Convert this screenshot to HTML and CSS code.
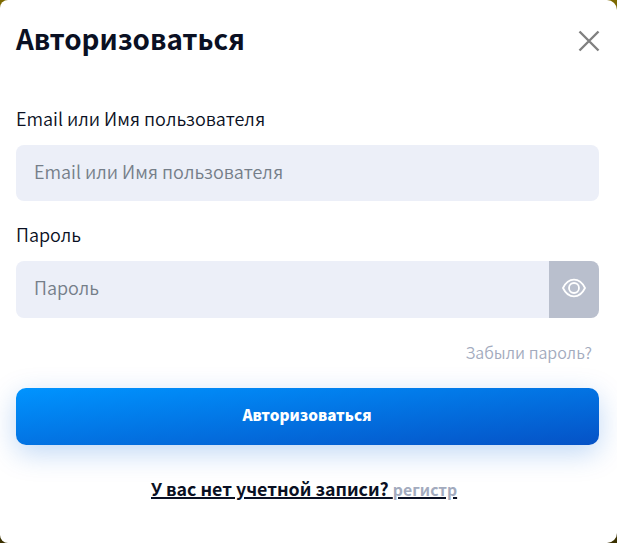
FILE: index.html
```
<!DOCTYPE html>
<html lang="ru">
  <head>
    <meta charset="UTF-8" />
    <meta name="viewport" content="width=device-width, initial-scale=1.0" />
    <title>Авторизоваться</title>
    <link rel="stylesheet" href="styles.css">
  </head>
  <body>
    <div class="modal">
      <div class="modal-header">
        <h1>Авторизоваться</h1>
        <button type="button" class="close-btn" aria-label="Закрыть">
          <svg width="22" height="22" viewBox="0 0 22 22">
            <path d="M1.5 1.5L20.5 20.5M20.5 1.5L1.5 20.5" />
          </svg>
        </button>
      </div>

      <form class="login-form">
        <label for="login">Email или Имя пользователя</label>
        <input type="text" id="login" placeholder="Email или Имя пользователя" />

        <label for="password">Пароль</label>
        <div class="password-group">
          <input type="password" id="password" placeholder="Пароль" />
          <button type="button" class="eye-btn" aria-label="Показать пароль">
            <svg width="24" height="20" viewBox="0 0 24 20">
              <path d="M1 10C3.6 4.6 7.4 1.6 12 1.6S20.400 4.600 23 10C20.400 15.400 16.600 18.400 12 18.400S3.600 15.400 1 10Z" />
              <circle cx="12" cy="10" r="5" />
            </svg>
          </button>
        </div>

        <a class="forgot-link" href="#">Забыли пароль?</a>
        <button type="submit" class="submit-btn">Авторизоваться</button>
      </form>

      <p class="register">У вас нет учетной записи? <a href="#">регистр</a></p>
    </div>
  </body>
</html>
```
FILE: styles.css
```
* {
  box-sizing: border-box;
}

body {
  margin: 0;
  height: 100vh;
  overflow: hidden;
  background: linear-gradient(#7d6900, #3a3000);
  color: #0a1023;
  font-family: "Noto Sans CJK SC", "Noto Sans", sans-serif;
}

.modal {
  height: 543px;
  padding: 20px 18px 0 16px;
  background: #fff;
  border-radius: 8px 10px 10px 8px;
}

.modal-header {
  display: flex;
  justify-content: space-between;
  align-items: center;
  height: 40px;
}

h1 {
  margin: -5px 0 0;
  font-size: 27.8px;
  font-weight: 700;
  line-height: 40px;
}

button {
  padding: 0;
  border: none;
  font-family: inherit;
  cursor: pointer;
}

.close-btn {
  display: flex;
  margin-top: 2px;
  margin-right: -1px;
  background: none;
}

.close-btn svg {
  fill: none;
  stroke: #808080;
  stroke-width: 2.4;
}

.login-form {
  display: flex;
  flex-direction: column;
  margin-top: 44px;
}

label {
  margin-bottom: 13px;
  font-size: 18px;
  font-weight: 350;
  line-height: 28px;
}

input {
  width: 100%;
  height: 56px;
  padding: 0 18px 5px;
  border: none;
  border-radius: 8px;
  background: #eceff8;
  color: #0a1023;
  font-family: inherit;
  font-size: 18px;
  font-weight: 350;
}

input::placeholder {
  color: #757e89;
  opacity: 1;
}

#login {
  margin-bottom: 19px;
}

.password-group {
  display: flex;
  height: 57px;
  border-radius: 8px;
  overflow: hidden;
}

.password-group input {
  flex: 1;
  height: 57px;
  border-radius: 0;
}

.eye-btn {
  display: flex;
  justify-content: center;
  align-items: center;
  width: 50px;
  padding-bottom: 4px;
  background: #b9bfcd;
}

.eye-btn svg {
  fill: none;
  stroke: #fff;
  stroke-width: 1.8;
}

.forgot-link {
  align-self: flex-end;
  margin: 22px 7px 0 0;
  color: #a3abbe;
  font-size: 16px;
  font-weight: 350;
  line-height: 24px;
  text-decoration: none;
}

.submit-btn {
  height: 57px;
  margin-top: 24px;
  padding: 0 1px 6px 0;
  border-radius: 10px;
  background: linear-gradient(to bottom right, #0094ff 0%, #0552c6 100%);
  box-shadow: 0 8px 28px rgba(5, 100, 220, 0.25);
  color: #fff;
  font-size: 15.3px;
  font-weight: 900;
}

.register {
  margin: 29px 0 0 135px;
  font-size: 17.8px;
  font-weight: 700;
  line-height: 28px;
  text-decoration: underline 2px;
}

.register a {
  color: #a3abbe;
  font-size: 15.8px;
  text-decoration: none;
}
```
